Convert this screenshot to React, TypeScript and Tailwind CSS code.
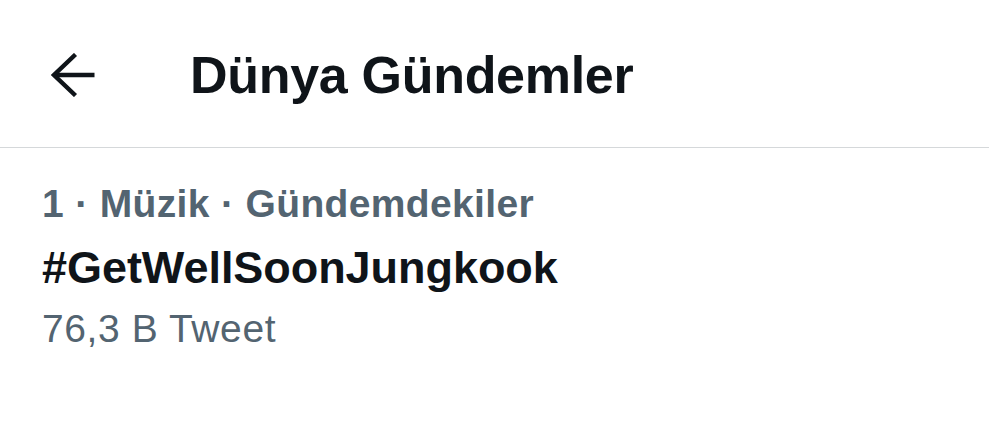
export default function App() {
  return (
    <div className="h-[421px] w-[989px] overflow-hidden bg-white text-[#0f1419]" style={{ fontFamily: '"Liberation Sans", Arial, sans-serif' }}>
      <header className="flex h-[148px] items-center border-b border-[#d5d8da] pt-[2px]">
        <svg
          className="ml-[51px] shrink-0"
          width="46"
          height="44"
          viewBox="0 0 46 44"
          fill="none"
          stroke="#0f1419"
          strokeWidth="4.4"
          aria-hidden
        >
          <path d="M43.5 22H3" />
          <path d="M24.5 1.5L3 22l21.5 20.5" />
        </svg>
        <h1 className="ml-[93px] text-[52px] font-bold leading-[60px] tracking-[-0.3px]">Dünya Gündemler</h1>
      </header>

      <section className="pl-[42px] pt-[27px]">
        <p className="text-[39px] font-bold leading-[58px] tracking-[0.35px] text-[#536471]">1 · Müzik · Gündemdekiler</p>
        <p className="text-[45px] font-bold leading-[69px] tracking-[-0.05px]">#GetWellSoonJungkook</p>
        <p className="text-[39px] leading-[54px] tracking-[0.6px] text-[#536471]">76,3 B Tweet</p>
      </section>
    </div>
  )
}
